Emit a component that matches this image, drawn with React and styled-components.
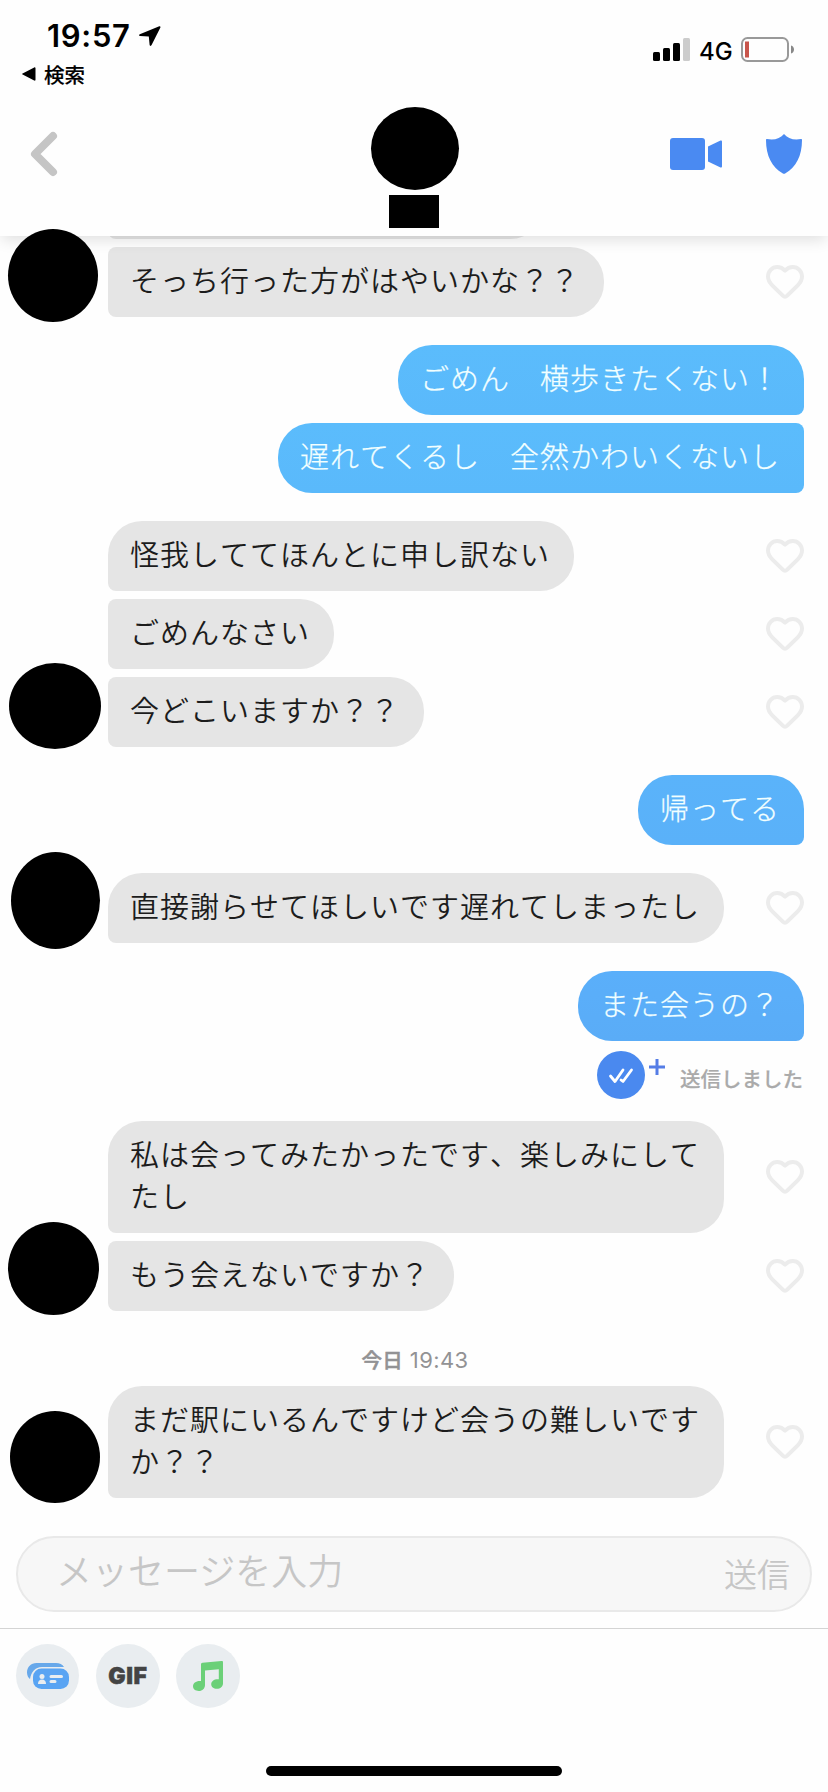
import React from "react";
import styled, { createGlobalStyle } from "styled-components";

const groups = [
  {
    from: "them",
    avatar: { w: 90, h: 93, left: 8, bottom: -5 },
    joined: true,
    messages: ["そっち行った方がはやいかな？？"],
  },
  {
    from: "me",
    tint: ["#5bbcfc", "#5ab9fb"],
    messages: ["ごめん　横歩きたくない！", "遅れてくるし　全然かわいくないし"],
  },
  {
    from: "them",
    avatar: { w: 92, h: 86, left: 9, bottom: -2 },
    messages: ["怪我しててほんとに申し訳ない", "ごめんなさい", "今どこいますか？？"],
  },
  { from: "me", tint: ["#5ab3fa", "#5ab1f9"], messages: ["帰ってる"] },
  {
    from: "them",
    avatar: { w: 89, h: 97, left: 11, bottom: -6 },
    messages: ["直接謝らせてほしいです遅れてしまったし"],
  },
  {
    from: "me",
    tint: ["#5aaffa", "#5aacf7"],
    messages: ["また会うの？"],
    receipt: "送信しました",
  },
  {
    from: "them",
    avatar: { w: 91, h: 93, left: 8, bottom: -4 },
    messages: ["私は会ってみたかったです、楽しみにしてたし", "もう会えないですか？"],
  },
  { from: "date", day: "今日", time: "19:43" },
  {
    from: "them",
    avatar: { w: 90, h: 92, left: 10, bottom: -5 },
    messages: ["まだ駅にいるんですけど会うの難しいですか？？"],
  },
];

const Heart = () => (
  <svg width="38" height="34" viewBox="0 0 38 34">
    <path
      d="M19 5.6C16.5 2.9 14.1 2 11.3 2 6 2 2 6.200 2 11.600c0 3.700 1.600 6.200 4.500 9l10.600 10.300c1.200 1.200 2.600 1.200 3.800 0l10.600-10.300c2.900-2.800 4.500-5.300 4.500-9C36 6.200 32 2 26.700 2c-2.800 0-5.200.9-7.700 3.600z"
      fill="none"
      stroke="#ececec"
      strokeWidth="4"
      strokeLinejoin="round"
    />
  </svg>
);

const Messages = ({ group }) => {
  const mine = group.from === "me";
  return group.messages.map((text, i) => (
    <Line key={text} $mine={mine}>
      <Bubble $mine={mine} $joined={i > 0 || group.joined} $tint={group.tint}>
        {text}
      </Bubble>
      {!mine && <Heart />}
    </Line>
  ));
};

const App = () => {
  return (
    <Screen>
      <GlobalStyle />
      <Top>
        <StatusBar>
          <div>
            <Clock>
              19:57
              <svg width="22" height="20" viewBox="0 0 22 20">
                <path d="M20.300.3L.8 8.300c-1.200.5-.9 1.700.3 1.800l8.700.5.800 8.200c.1 1.300 1.500 1.500 2 .3L21.400 1.500c.3-.8-.3-1.500-1.100-1.200z" />
              </svg>
            </Clock>
            <Return>
              <svg width="14" height="14" viewBox="0 0 14 14">
                <path d="M13.500 1.200v11.600c0 .8-.6 1.200-1.300.8L.6 7.600c-.7-.4-.7-.8 0-1.200L12.200.4c.7-.4 1.300 0 1.300.8z" />
              </svg>
              検索
            </Return>
          </div>
          <Signal>
            <svg width="37" height="23" viewBox="0 0 37 23">
              <rect y="14" width="7" height="9" rx="1.500" />
              <rect x="10" y="10" width="7" height="13" rx="1.500" />
              <rect x="20" y="5" width="7" height="18" rx="1.500" />
              <rect x="30" width="7" height="23" rx="1.500" fill="#ccc" />
            </svg>
            <span>4G</span>
            <svg width="54" height="25" viewBox="0 0 54 25">
              <rect x="1" y="1" width="46" height="23" rx="5.500" fill="none" stroke="#999" strokeWidth="2" />
              <rect x="4" y="4.500" width="4" height="16" fill="#c8554b" />
              <path d="M50 8.500c4 1 4 7 0 8z" fill="#888" />
            </svg>
          </Signal>
        </StatusBar>
        <NavBar>
          <svg width="28" height="46" viewBox="0 0 28 46">
            <path d="M23 5L5 23l18 18" fill="none" stroke="#c5c5c5" strokeWidth="8" strokeLinecap="round" strokeLinejoin="round" />
          </svg>
          <Profile>
            <Portrait />
            <Name />
          </Profile>
          <Actions>
            <svg width="52" height="32" viewBox="0 0 52 32">
              <rect width="35" height="32" rx="3" fill="#4a8af2" />
              <path d="M38 8.500l12-5.700c1.300-.6 2 0 2 1v24.400c0 1-.7 1.600-2 1L38 23.500z" fill="#4a8af2" />
            </svg>
            <svg width="36" height="40" viewBox="0 0 36 40">
              <path d="M18 0c-3.500 4.500-10 6.500-17 5-.7 0-1 .4-1 1 0 16 6 27 16.500 33.300 1 .7 2 .7 3 0C30 33 36 22 36 6c0-.6-.3-1-1-1-7 1.500-13.500-.5-17-5z" fill="#4a8af2" />
            </svg>
          </Actions>
        </NavBar>
      </Top>
      <Chat>
        <Previous />
        {groups.map((group, i) => {
          if (group.from === "date") {
            return (
              <DateLine key={i}>
                <b>{group.day}</b> {group.time}
              </DateLine>
            );
          }
          return (
            <Group key={i} $mine={group.from === "me"}>
              <Messages group={group} />
              {group.avatar && <Avatar $box={group.avatar} />}
              {group.receipt && (
                <Receipt>
                  <svg width="48" height="48" viewBox="0 0 48 48">
                    <circle cx="24" cy="24" r="24" fill="#4a89ef" />
                    <path d="M13.500 25l4.500 5.500 8-11.500M24 29l2 1.500 8.500-11.500" fill="none" stroke="#fff" strokeWidth="2.800" strokeLinecap="round" strokeLinejoin="round" />
                  </svg>
                  <Plus width="16" height="16" viewBox="0 0 16 16">
                    <path d="M8 0v16M0 8h16" stroke="#557de6" strokeWidth="3" />
                  </Plus>
                  <span>{group.receipt}</span>
                </Receipt>
              )}
            </Group>
          );
        })}
      </Chat>
      <Composer>
        <Placeholder>メッセージを入力</Placeholder>
        <Send>送信</Send>
      </Composer>
      <Tools>
        <Tool $size={63}>
          <svg width="42" height="26" viewBox="0 0 42 26">
            <path d="M3 16C1 14.500 0 12 0 9.500 0 4 4 0 9.500 0H29c3.500 0 6.500 1.300 8 4H15C8 4 4 9 3 16z" fill="#67a8ea" />
            <rect x="6" y="5.500" width="36" height="20.500" rx="8.500" fill="#59a4f3" />
            <circle cx="15" cy="13.500" r="2.500" fill="#e9edf0" />
            <path d="M11 21c0-3 1.500-4.500 4-4.500s4 1.500 4 4.500z" fill="#e9edf0" />
            <path d="M24 13.500h10.500M24 18.500h4" stroke="#e9edf0" strokeWidth="3" strokeLinecap="round" />
          </svg>
        </Tool>
        <Tool $size={64}>GIF</Tool>
        <Tool $size={64}>
          <svg width="30" height="30" viewBox="0 0 30 30">
            <path d="M8 3.500C8 2.300 8.500 1.900 9.500 1.800L28.500.1c1-.1 1.500.3 1.500 1.300V22.500c0 3-2.600 5.300-6.200 5.300-3.200 0-5.600-1.900-5.600-4.600 0-3.300 3.300-5.500 7.600-5V8.200L12 9.400V24c0 3.400-2.500 6-6.200 6C2.400 30 0 28.100 0 25.300c0-3.500 3.500-5.900 8-5.300z" fill="#6bd078" />
          </svg>
        </Tool>
      </Tools>
      <HomeIndicator />
    </Screen>
  );
};

const GlobalStyle = createGlobalStyle`
  * {
    box-sizing: border-box;
  }
  body {
    margin: 0;
    background: #fefefe;
    font-family: Inter, "Noto Sans CJK JP", sans-serif;
  }
  svg {
    display: block;
    flex-shrink: 0;
  }
`;

const Screen = styled.div`
  display: flex;
  flex-direction: column;
  width: 828px;
  height: 1792px;
  overflow: hidden;
  background: #fefefe;
`;

const Top = styled.header`
  flex-shrink: 0;
  height: 236px;
  background: #fefefe;
  box-shadow: 0 6px 14px -2px rgba(0, 0, 0, 0.12);
  position: relative;
  z-index: 1;
`;

const StatusBar = styled.div`
  display: flex;
  justify-content: space-between;
  height: 107px;
  padding: 17px 33px 0 22px;
`;

const Clock = styled.div`
  display: flex;
  align-items: center;
  gap: 8px;
  height: 37px;
  margin-bottom: 1px;
  padding-left: 25px;
  font-size: 31px;
  font-weight: 600;
  letter-spacing: 0.7px;
`;

const Return = styled.div`
  display: flex;
  align-items: center;
  gap: 8px;
  height: 38px;
  padding-bottom: 1px;
  font-size: 20.5px;
  font-weight: 500;
  -webkit-text-stroke: 0.2px;
`;

const Signal = styled.div`
  display: flex;
  align-items: center;
  height: 25px;
  margin-top: 20px;
  font-size: 24px;
  font-weight: 500;
  span {
    width: 51px;
    padding-left: 9px;
    margin-top: 3px;
  }
`;

const NavBar = styled.div`
  display: grid;
  grid-template-columns: 1fr auto 1fr;
  padding: 0 26px 0 30px;
  > svg {
    margin-top: 24px;
  }
`;

const Profile = styled.div`
  display: flex;
  flex-direction: column;
  align-items: center;
  gap: 5px;
  width: 88px;
  margin-right: 2px;
`;

const Portrait = styled.div`
  width: 88px;
  height: 83px;
  border-radius: 50%;
  background: #000;
`;

const Name = styled.div`
  width: 50px;
  height: 33px;
  margin-right: 2px;
  background: #000;
`;

const Actions = styled.div`
  display: flex;
  align-items: center;
  justify-content: flex-end;
  gap: 44px;
  height: 40px;
  margin-top: 27px;
`;

const Chat = styled.main`
  flex: 1;
  display: flex;
  flex-direction: column;
`;

// tail of the message scrolled under the header
const Previous = styled.div`
  flex-shrink: 0;
  width: 436px;
  height: 70px;
  margin: -67px 0 8px 108px;
  border-radius: 34px 34px 34px 8px;
  background: #e5e5e5;
`;

const Group = styled.div`
  position: relative;
  display: flex;
  flex-direction: column;
  gap: 8px;
  margin-bottom: 28px;
  padding: 0 24px 0 ${({ $mine }) => ($mine ? "24px" : "108px")};
  &:last-child {
    margin-bottom: 0;
  }
`;

const Line = styled.div`
  display: flex;
  align-items: center;
  justify-content: ${({ $mine }) => ($mine ? "flex-end" : "space-between")};
`;

const Bubble = styled.div`
  max-width: 616px;
  padding: 11px 24px 17px 22px;
  font-size: 29px;
  font-weight: ${({ $mine }) => ($mine ? 300 : 350)};
  font-family: "Noto Sans CJK JP", sans-serif;
  font-kerning: none;
  letter-spacing: 1px;
  line-height: 42px;
  word-break: break-all;
  -webkit-text-stroke: ${({ $mine }) => ($mine ? "0.25px" : "0")};
  color: ${({ $mine }) => ($mine ? "#f2ffff" : "#1c1c1c")};
  background: ${({ $mine, $tint }) =>
    $mine ? `linear-gradient(${$tint[0]}, ${$tint[1]})` : "#e5e5e5"};
  border-radius: ${({ $mine, $joined }) => {
    const corner = $joined ? "8px" : "34px";
    return $mine ? `34px ${corner} 8px 34px` : `${corner} 34px 34px 8px`;
  }};
`;

const Avatar = styled.div`
  position: absolute;
  z-index: 2;
  left: ${({ $box }) => $box.left}px;
  bottom: ${({ $box }) => $box.bottom}px;
  width: ${({ $box }) => $box.w}px;
  height: ${({ $box }) => $box.h}px;
  border-radius: 50%;
  background: #000;
`;

const Receipt = styled.div`
  display: flex;
  justify-content: flex-end;
  height: 48px;
  margin: 2px 1px -6px 0;
  span {
    margin: 14px 0 0 15px;
    font-size: 20.500px;
    font-weight: 500;
    line-height: 30px;
    color: #aaa;
    -webkit-text-stroke: 0.2px;
  }
`;

const Plus = styled.svg`
  margin: 8px 0 0 4px;
`;

const DateLine = styled.div`
  height: 47px;
  padding-left: 2px;
  font-size: 22px;
  letter-spacing: 0.4px;
  line-height: 42px;
  text-align: center;
  color: #929294;
  b {
    font-size: 20.500px;
    font-weight: 500;
    -webkit-text-stroke: 0.5px;
  }
`;

const Composer = styled.div`
  display: flex;
  align-items: center;
  justify-content: space-between;
  flex-shrink: 0;
  height: 76px;
  margin: 0 16px 16px;
  padding: 0 20px 0 38px;
  border: 2px solid #e9e9e9;
  border-radius: 38px;
  background: #f7f7f7;
  font-family: "Noto Sans CJK JP", sans-serif;
  font-weight: 350;
  color: #c6c6c6;
`;

const Placeholder = styled.span`
  font-size: 36px;
  line-height: 70px;
  margin-top: -10px;
`;

const Send = styled.span`
  font-size: 33px;
  line-height: 70px;
  margin-top: -3px;
`;

const Tools = styled.div`
  display: flex;
  flex-shrink: 0;
  gap: 16px;
  height: 138px;
  padding: 15px 16px 0;
  border-top: 1px solid #d4d4d4;
`;

const Tool = styled.div`
  display: flex;
  align-items: center;
  justify-content: center;
  width: ${({ $size }) => $size}px;
  height: ${({ $size }) => $size}px;
  border-radius: 50%;
  background: #e9edf0;
  font-size: 23px;
  font-weight: 900;
  letter-spacing: 0.6px;
  -webkit-text-stroke: 0.5px;
  color: #444;
  &:first-child {
    margin-right: 1px;
  }
`;

const HomeIndicator = styled.div`
  flex-shrink: 0;
  width: 296px;
  height: 10px;
  margin: 0 auto 16px;
  border-radius: 5px;
  background: #000;
`;

export default App;
